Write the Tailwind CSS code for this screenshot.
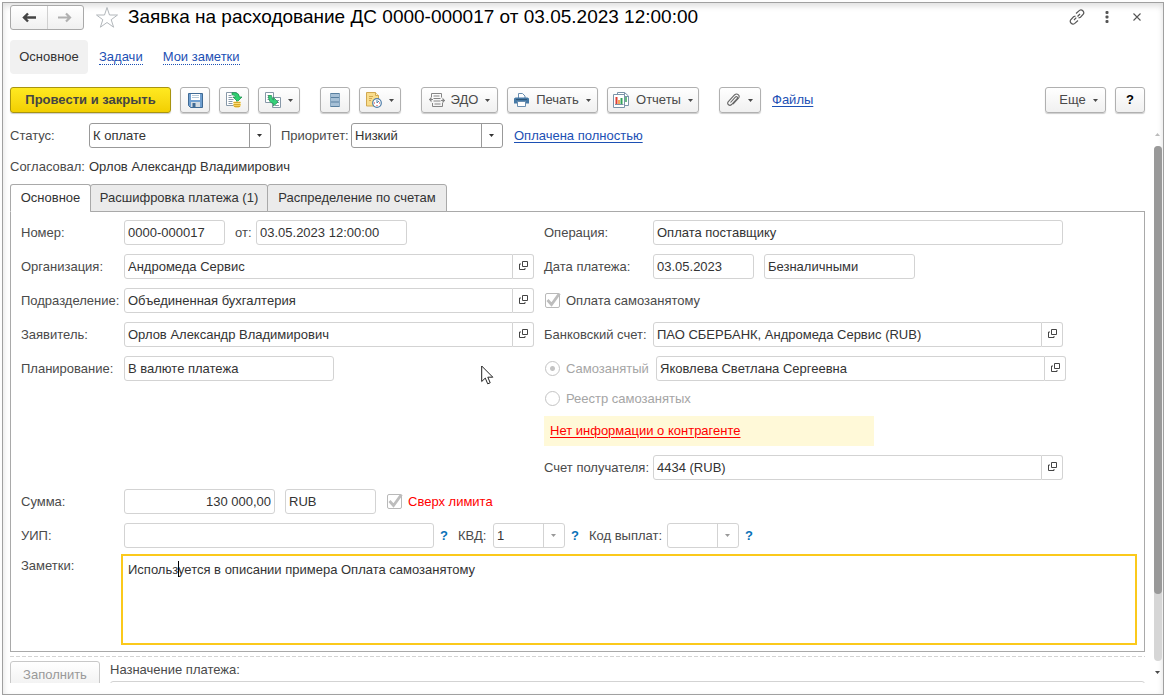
<!DOCTYPE html>
<html lang="ru">
<head>
<meta charset="utf-8">
<title>Заявка на расходование ДС</title>
<script src="https://cdn.jsdelivr.net/npm/@tailwindcss/browser@4"></script>
</head>
<body class="bg-[#fdfdfd] font-['Liberation_Sans',Arial,sans-serif] text-[13px] leading-4 text-[#4a4a4a]">
<svg class="hidden">
  <symbol id="open" viewBox="0 0 9 9"><path d="M3.500.5h5v5h-5zM2 3H.5v5.500H6V7" fill="none" stroke="#444" /></symbol>
  <symbol id="down" viewBox="0 0 5 3"><path d="M0 0h5L2.500 3z" fill="currentColor" /></symbol>
  <symbol id="tick" viewBox="0 0 16 16"><path d="M2.500 7l4 4.500L14.500 .5" fill="none" stroke="#bdbdbd" stroke-width="2.800" /></symbol>
</svg>
<div class="flex h-screen pt-[2px] pl-[2px]">
<main class="relative flex min-w-0 flex-1 flex-col overflow-hidden border border-[#a0a0a0] bg-white pb-[11px] pl-[7px] shadow-[inset_0_3px_6px_#dedede]">

  <header class="flex h-[26px] items-center pt-[2px] pr-[17px]">
    <div class="flex h-[25px] w-[74px] shrink-0 overflow-hidden rounded-[3px] border border-[#a9a9a9] bg-linear-to-b from-white to-[#f0f0f0]">
      <button aria-label="Назад" class="flex flex-1 items-center justify-center border-r border-[#d0d0d0]"><svg class="h-[11px] w-[14px]" viewBox="0 0 14 11"><path d="M14 5.500H2M6 1.500L2 5.500l4 4" fill="none" stroke="#444" stroke-width="2.400"/></svg></button>
      <button aria-label="Вперед" class="flex flex-1 items-center justify-center"><svg class="h-[11px] w-[14px]" viewBox="0 0 14 11"><path d="M0 5.500h12M8 1.500l4 4-4 4" fill="none" stroke="#b0b0b0" stroke-width="2.200"/></svg></button>
    </div>
    <button aria-label="В избранное" class="ml-[11px] shrink-0"><svg class="h-[23px] w-[24px]" viewBox="0 0 24 23"><path d="M12 1.500l2.500 7.500h8l-6.300 4.700 2.400 7.500L12 16.500l-6.600 4.700 2.400-7.500L1.500 9h8z" fill="#fff" stroke="#b2b7bb"/></svg></button>
    <h1 class="ml-[9px] flex-1 truncate text-[19px] leading-6 text-black">Заявка на расходование ДС 0000-000017 от 03.05.2023 12:00:00</h1>
    <button aria-label="Получить ссылку"><svg class="h-4 w-4" viewBox="0 0 16 16" fill="none" stroke="#555" stroke-width="1.200"><path d="M7 4.500L10.500 1.400c2.200-1.700 5.400 1.300 3.800 3.800L11.500 8.200 9.500 9M9 11.500l-3.500 3.100c-2.200 1.700-5.400-1.300-3.800-3.800L4.500 7.800 6.500 7M5 11l2.300-2.300M8.500 7.500L11 5"/></svg></button>
    <button aria-label="Меню" class="ml-[20px]"><svg class="h-[12px] w-[4px]" viewBox="0 0 4 12" fill="#555"><rect x=".5" y="0" width="3" height="3" rx="1"/><rect x=".5" y="4.500" width="3" height="3" rx="1"/><rect x=".5" y="9" width="3" height="3" rx="1"/></svg></button>
    <button aria-label="Закрыть" class="mr-[5px] ml-[24px]"><svg class="h-[8px] w-[8px]" viewBox="0 0 8 8"><path d="M.5.5l7 7M7.500.5l-7 7" stroke="#555" stroke-width="1.100"/></svg></button>
  </header>

  <nav class="mt-[11px] flex h-[34px] shrink-0 items-center text-[#1c50b4]">
    <a href="#" class="flex h-full w-[78px] items-center justify-center rounded-[4px] bg-[#f1f1f1] text-[#333]">Основное</a>
    <a href="#" class="ml-[11px] border-b border-dotted border-[#1c50b4] leading-[14px]">Задачи</a>
    <a href="#" class="ml-[20px] border-b border-dotted border-[#1c50b4] leading-[14px]">Мои заметки</a>
  </nav>

  <div class="mt-[13px] flex h-[26px] shrink-0 items-center gap-[9px] pr-[18px] *:shrink-0 [&>button]:flex [&>button]:h-full [&>button]:items-center [&>button]:justify-center [&>button]:rounded-[3px] [&>button]:border [&>button]:shadow-[0_1px_1px_#ccc]">
    <button class="w-[161px] border-[#a89410] bg-linear-to-b from-[#ffe920] to-[#f2cf00] font-bold text-[#444]">Провести и закрыть</button>
    <button aria-label="Записать" class="w-[30px] border-[#b0b0b0] bg-linear-to-b from-white to-[#f0f0f0]"><svg class="h-[15px] w-[15px]" viewBox="0 0 15 15"><path d="M.5.5h14v14h-12l-2-2z" fill="#6f9fd0" stroke="#3f6a94"/><path d="M3 1h9v6H3z" fill="#fff"/><path d="M4 2.500h7M4 4.500h7" stroke="#b5c8d8"/><path d="M3 9h9v5H3z" fill="#d3dbe2"/><path d="M4.500 10h3v4h-3z" fill="#3f6a94"/></svg></button>
    <button aria-label="Провести" class="w-[30px] border-[#b0b0b0] bg-linear-to-b from-white to-[#f0f0f0]"><svg class="h-4 w-4" viewBox="0 0 16 16"><path d="M.5.5h10v13H.5z" fill="#fff" stroke="#8798a8"/><path d="M2.500 3.500h3M2.500 5.500h4M2.500 7.500h5M2.500 9.500h4M2.500 11.500h4" stroke="#8798a8"/><path d="M6 .7h3.500q3.500.3 4 4.300H16L11.500 9.500 7 5h2.500Q9.500 3 6 2.800z" fill="#2fd070" stroke="#178a48" stroke-width=".7"/><ellipse cx="11" cy="13.500" rx="3.500" ry="2" fill="#f0c43a"/><path d="M7.500 9.500h7v4h-7z" fill="#fbe07a"/><path d="M7.500 10.500h7M7.500 12.500h7M8 14.500h6" stroke="#d8a82a"/></svg></button>
    <button aria-label="Создать на основании" class="w-[42px] gap-[7px] border-[#b0b0b0] bg-linear-to-b from-white to-[#f0f0f0]"><svg class="h-4 w-4" viewBox="0 0 16 16"><path d="M.5.5h8v10h-8z" fill="#fff" stroke="#8798a8"/><path d="M2.500 3.500h2M2.500 5.500h2M2.500 7.500h2" stroke="#8798a8"/><path d="M7.500 5.500h8v10h-8z" fill="#fff" stroke="#8798a8"/><path d="M12 8.500h2M12 10.500h2M10 13.500h4" stroke="#8798a8"/><path d="M3.500 3.500h3q0 4 2 4.500V5.500L13 10l-4.500 4v-2.500Q3.500 11 3.500 3.500z" fill="#35d07a" stroke="#178a48" stroke-width=".7"/></svg><svg class="h-[3px] w-[5px]"><use href="#down"/></svg></button>
    <button aria-label="Список" class="ml-[11px] w-[30px] border-[#b0b0b0] bg-linear-to-b from-white to-[#f0f0f0]"><svg class="h-[14px] w-[10px]" viewBox="0 0 10 14"><path d="M0 0h10v14H0z" fill="#a6c0d6"/><path d="M0 .5h10M0 4.500h10M0 9h10M0 13.500h10" stroke="#587f9f"/><path d="M.5 0v14M9.500 0v14" stroke="#86a6c0"/></svg></button>
    <button aria-label="Отложить" class="w-[42px] gap-[7px] border-[#b0b0b0] bg-linear-to-b from-white to-[#f0f0f0]"><svg class="h-4 w-4" viewBox="0 0 16 16"><path d="M.5.500h9l3 3v10.500H.5z" fill="#f9dd8c" stroke="#d1a851"/><path d="M9.500.5v3h3" fill="#fff2c4" stroke="#d1a851"/><path d="M3 4.500h4M3 6.500h3M3 8.500h2" stroke="#d1a851"/><circle cx="11" cy="11" r="4.300" fill="#fff" stroke="#4f7ea9" stroke-width="1.200"/><path d="M11 11V8M11 11l2-2" stroke="#4f7ea9"/><path d="M8 10.500h1v1H8zM13 10.500h1v1h-1zM10.500 13h1v1h-1z" fill="#d33"/></svg><svg class="h-[3px] w-[5px]"><use href="#down"/></svg></button>
    <button class="ml-[11px] w-[77px] border-[#b0b0b0] bg-linear-to-b from-white to-[#f0f0f0]"><svg class="mr-[6px] h-[15px] w-4" viewBox="0 0 16 15" fill="none" stroke="#858585"><path d="M2.500 4V.5h10v4M3.500 10v3.500h10V10M4.500 3h6M4.500 5.500h7M4.500 8h7M5.500 11h6M0 6.500h4M12 7.500h4"/><path d="M2.500 3.500v6L0 6.500zM13.500 4.500v6L16 7.500z" fill="#858585" stroke="none"/></svg>ЭДО<svg class="ml-[7px] h-[3px] w-[5px]"><use href="#down"/></svg></button>
    <button class="w-[91px] border-[#b0b0b0] bg-linear-to-b from-white to-[#f0f0f0]"><svg class="mr-[7px] h-[14px] w-[15px]" viewBox="0 0 15 14"><path d="M4.500 5V.5h4l2.500 2.500V5" fill="#fff" stroke="#6b8fb0"/><path d="M1.500 4.500h12l1.500 1v5H0v-5z" fill="#4679a5"/><path d="M2 6.500h11" stroke="#2d5578"/><path d="M3.500 8.500h8v5h-8z" fill="#fff" stroke="#6b8fb0"/></svg>Печать<svg class="ml-[7px] h-[3px] w-[5px]"><use href="#down"/></svg></button>
    <button class="w-[92px] border-[#b0b0b0] bg-linear-to-b from-white to-[#f0f0f0]"><svg class="mr-[7px] h-4 w-4" viewBox="0 0 16 16"><path d="M4.500.5h7l4 3.500v9.500h-11z" fill="#fff" stroke="#7b93a8"/><path d="M11.500.5v4h4" fill="none" stroke="#7b93a8"/><path d="M.5 2.500h11v13H.5z" fill="#fff" stroke="#7b93a8"/><path d="M3.500 5v7" stroke="#de3d32" stroke-width="2"/><path d="M6 8v4" stroke="#f08a24" stroke-width="1.500"/><path d="M8.500 6v6" stroke="#35a35b" stroke-width="2"/><path d="M13 5v5" stroke="#35a35b" stroke-width="1.500"/><path d="M2 12.500h8.500" stroke="#7b93a8"/></svg>Отчеты<svg class="ml-[7px] h-[3px] w-[5px]"><use href="#down"/></svg></button>
    <button aria-label="Присоединенные файлы" class="ml-[11px] w-[42px] gap-[8px] border-[#b0b0b0] bg-linear-to-b from-white to-[#f0f0f0]"><svg class="h-[14px] w-[13px]" viewBox="0 0 13 14" fill="none" stroke="#666" stroke-width="1.100"><path d="M3.500 9.500l5-5.500c1.200-1.100 2.600.2 1.600 1.500l-5.500 6C2.500 13.500-.5 11 1.300 8.700L7.500 2c2.500-2.500 6 .5 4 3.200l-5.500 6"/></svg><svg class="h-[3px] w-[5px]"><use href="#down"/></svg></button>
    <a href="#" class="ml-[2px] text-[#1c50b4] underline underline-offset-2">Файлы</a>
    <button class="ml-auto w-[61px] border-[#b0b0b0] bg-linear-to-b from-white to-[#f0f0f0] pl-[6px]">Еще<svg class="ml-[7px] h-[3px] w-[5px]"><use href="#down"/></svg></button>
    <button aria-label="Справка" class="w-[30px] border-[#b0b0b0] bg-linear-to-b from-white to-[#f0f0f0] font-bold text-black">?</button>
  </div>

  <div class="mt-[10px] flex min-h-0 flex-1 pr-[1px]">
    <div class="min-w-0 flex-1 overflow-hidden">
      <div class="flex h-[25px] items-center">
        <label for="status" class="w-[79px]">Статус:</label>
        <div class="relative h-full w-[182px] rounded-[3px] border border-[#999] text-[#333]">
          <select id="status" class="h-full w-full appearance-none pl-[3px]"><option>К оплате</option></select>
          <span class="pointer-events-none absolute inset-y-0 right-0 flex w-[21px] items-center justify-center border-l border-[#999] pr-px"><svg class="h-[3px] w-[5px]"><use href="#down"/></svg></span>
        </div>
        <label for="prio" class="ml-[10px] w-[70px]">Приоритет:</label>
        <div class="relative h-full w-[152px] rounded-[3px] border border-[#999] text-[#333]">
          <select id="prio" class="h-full w-full appearance-none pl-[3px]"><option>Низкий</option></select>
          <span class="pointer-events-none absolute inset-y-0 right-0 flex w-[21px] items-center justify-center border-l border-[#999] pr-px"><svg class="h-[3px] w-[5px]"><use href="#down"/></svg></span>
        </div>
        <a href="#" class="ml-[11px] text-[#1c50b4] underline underline-offset-2">Оплачена полностью</a>
      </div>
      <div class="mt-[11px] flex"><span class="w-[79px]">Согласовал:</span><span class="text-[#333]">Орлов Александр Владимирович</span></div>

      <div role="tablist" class="relative -mb-px mt-[9px] flex h-[28px] text-[#333] *:border *:border-[#a9a9a9]">
        <button role="tab" aria-selected="true" class="w-[81px] rounded-t-[3px] border-b-white! bg-white">Основное</button>
        <button role="tab" class="-ml-px w-[178px] rounded-t-[3px] bg-[#ebebeb]">Расшифровка платежа (1)</button>
        <button role="tab" class="-ml-px w-[180px] rounded-t-[3px] bg-[#ebebeb]">Распределение по счетам</button>
      </div>

      <section class="border border-[#a9a9a9] pt-[8px] pr-[7px] pb-[6px] pl-[10px] [&_input[type=text]]:h-[25px] [&_input[type=text]]:rounded-[3px] [&_input[type=text]]:border [&_input[type=text]]:border-[#d3d3d3] [&_input[type=text]]:px-[3px] [&_input[type=text]]:text-[#333]">
        <div class="flex gap-[10px]">
          <div class="flex w-[513px] shrink-0 flex-col gap-[9px]">
            <div class="flex items-center"><label for="num" class="w-[103px]">Номер:</label><input id="num" type="text" value="0000-000017" class="w-[101px]"><label for="dt" class="ml-[10px] w-[21px]">от:</label><input id="dt" type="text" value="03.05.2023 12:00:00" class="w-[151px]"></div>
            <div class="flex items-center"><label for="org" class="w-[103px]">Организация:</label><input id="org" type="text" value="Андромеда Сервис" class="min-w-0 flex-1 rounded-r-none!"><button aria-label="Открыть организацию" class="flex h-[25px] w-[21px] items-center justify-center rounded-r-[3px] border border-l-0 border-[#d3d3d3] pb-[2px]"><svg class="h-[9px] w-[9px]"><use href="#open"/></svg></button></div>
            <div class="flex items-center"><label for="dep" class="w-[103px]">Подразделение:</label><input id="dep" type="text" value="Объединенная бухгалтерия" class="min-w-0 flex-1 rounded-r-none!"><button aria-label="Открыть подразделение" class="flex h-[25px] w-[21px] items-center justify-center rounded-r-[3px] border border-l-0 border-[#d3d3d3] pb-[2px]"><svg class="h-[9px] w-[9px]"><use href="#open"/></svg></button></div>
            <div class="flex items-center"><label for="who" class="w-[103px]">Заявитель:</label><input id="who" type="text" value="Орлов Александр Владимирович" class="min-w-0 flex-1 rounded-r-none!"><button aria-label="Открыть заявителя" class="flex h-[25px] w-[21px] items-center justify-center rounded-r-[3px] border border-l-0 border-[#d3d3d3] pb-[2px]"><svg class="h-[9px] w-[9px]"><use href="#open"/></svg></button></div>
            <div class="flex items-center"><label for="plan" class="w-[103px]">Планирование:</label><input id="plan" type="text" value="В валюте платежа" class="w-[210px]"></div>
          </div>
          <div class="flex w-[522px] shrink-0 flex-col gap-[9px]">
            <div class="flex items-center"><label for="op" class="w-[109px]">Операция:</label><input id="op" type="text" value="Оплата поставщику" class="w-[410px]"></div>
            <div class="flex items-center"><label for="pd" class="w-[109px]">Дата платежа:</label><input id="pd" type="text" value="03.05.2023" class="w-[101px]"><input aria-label="Форма оплаты" type="text" value="Безналичными" class="ml-[10px] w-[151px]"></div>
            <label class="flex h-[25px] items-center"><span class="relative mr-[6px] ml-px h-[15px] w-[15px]"><input type="checkbox" checked disabled class="block h-[15px] w-[15px] appearance-none rounded-[2px] border border-[#b9b9b9]"><svg class="absolute top-0 left-0 h-4 w-4"><use href="#tick"/></svg></span>Оплата самозанятому</label>
            <div class="flex items-center"><label for="bank" class="w-[109px]">Банковский счет:</label><input id="bank" type="text" value="ПАО СБЕРБАНК, Андромеда Сервис (RUB)" class="w-[389px] rounded-r-none!"><button aria-label="Открыть счет" class="flex h-[25px] w-[21px] items-center justify-center rounded-r-[3px] border border-l-0 border-[#d3d3d3] pb-[2px]"><svg class="h-[9px] w-[9px]"><use href="#open"/></svg></button></div>
            <div class="flex items-center"><label class="flex w-[112px] items-center text-[#a5a5a5]"><input type="radio" name="payee" checked disabled class="mr-[6px] ml-px h-[15px] w-[15px] appearance-none rounded-full border border-[#c4c4c4] bg-[radial-gradient(circle,#c4c4c4_2px,transparent_3px)]">Самозанятый</label><input aria-label="Самозанятый, имя" type="text" value="Яковлева Светлана Сергеевна" class="w-[389px] rounded-r-none!"><button aria-label="Открыть самозанятого" class="flex h-[25px] w-[21px] items-center justify-center rounded-r-[3px] border border-l-0 border-[#d3d3d3] pb-[2px]"><svg class="h-[9px] w-[9px]"><use href="#open"/></svg></button></div>
            <label class="flex h-[17px] items-center text-[#a5a5a5]"><input type="radio" name="payee" disabled class="mr-[6px] ml-px h-[15px] w-[15px] appearance-none rounded-full border border-[#c4c4c4]">Реестр самозанятых</label>
            <div class="flex h-[30px] w-[330px] items-center bg-[#fff9d8] pl-[6px]"><a href="#" class="text-[#ff0000] underline underline-offset-2">Нет информации о контрагенте</a></div>
            <div class="flex items-center"><label for="acc" class="w-[109px]">Счет получателя:</label><input id="acc" type="text" value="4434 (RUB)" class="w-[389px] rounded-r-none!"><button aria-label="Открыть счет получателя" class="flex h-[25px] w-[21px] items-center justify-center rounded-r-[3px] border border-l-0 border-[#d3d3d3] pb-[2px]"><svg class="h-[9px] w-[9px]"><use href="#open"/></svg></button></div>
          </div>
        </div>
        <div class="mt-[9px] flex items-center"><label for="sum" class="w-[103px]">Сумма:</label><input id="sum" type="text" value="130 000,00" class="w-[151px] text-right"><input aria-label="Валюта" type="text" value="RUB" class="ml-[10px] w-[91px]">
          <label class="ml-[10px] flex items-center text-[#ff0000]"><span class="relative mr-[6px] ml-px h-[15px] w-[15px]"><input type="checkbox" checked disabled class="block h-[15px] w-[15px] appearance-none rounded-[2px] border border-[#b9b9b9]"><svg class="absolute top-0 left-0 h-4 w-4"><use href="#tick"/></svg></span>Сверх лимита</label></div>
        <div class="mt-[9px] flex items-center">
          <label for="uip" class="w-[103px]">УИП:</label><input id="uip" type="text" class="w-[310px]">
          <button aria-label="Справка: УИП" class="w-[20px] font-bold text-[#0a72b8]">?</button>
          <label for="kvd" class="ml-[4px] w-[35px]">КВД:</label>
          <div class="relative h-[25px] w-[72px] rounded-[3px] border border-[#d3d3d3] text-[#333]"><select id="kvd" class="h-full w-full appearance-none pl-[3px]"><option>1</option></select><span class="pointer-events-none absolute inset-y-0 right-0 flex w-[21px] items-center justify-center border-l border-[#d3d3d3] pr-px text-[#999]"><svg class="h-[3px] w-[5px]"><use href="#down"/></svg></span></div>
          <button aria-label="Справка: КВД" class="w-[20px] font-bold text-[#0a72b8]">?</button>
          <label for="code" class="ml-[4px] w-[78px]">Код выплат:</label>
          <div class="relative h-[25px] w-[72px] rounded-[3px] border border-[#d3d3d3] text-[#333]"><select id="code" class="h-full w-full appearance-none pl-[3px]"><option></option></select><span class="pointer-events-none absolute inset-y-0 right-0 flex w-[21px] items-center justify-center border-l border-[#d3d3d3] pr-px text-[#999]"><svg class="h-[3px] w-[5px]"><use href="#down"/></svg></span></div>
          <button aria-label="Справка: код выплат" class="w-[20px] font-bold text-[#0a72b8]">?</button>
        </div>
        <div class="mt-[6px] flex"><label for="notes" class="w-[100px] pt-[4px]">Заметки:</label>
          <div class="relative flex-1"><textarea id="notes" class="block h-[91px] w-full resize-none border-2 border-[#fbc91b] px-[5px] py-[6px] text-[#333] outline-none">Используется в описании примера Оплата самозанятому</textarea><span class="absolute top-[7px] left-[57px] h-4 w-px bg-black"></span></div>
        </div>
      </section>

      <div class="mt-[4px] h-px bg-[repeating-linear-gradient(90deg,#d3d3d3_0_4px,transparent_4px_6px)]"></div>
      <div class="mt-[4px] flex">
        <button disabled class="h-[28px] w-[90px] rounded-[3px] border border-[#c8c8c8] bg-linear-to-b from-white to-[#f0f0f0] text-[#999]">Заполнить</button>
        <div class="ml-[10px] flex-1 pt-px"><label for="purpose">Назначение платежа:</label><input id="purpose" class="mt-[3px] block h-[25px] w-full rounded-[3px] border border-[#d3d3d3]"></div>
      </div>
    </div>
    <div class="ml-[8px] flex w-[9px] flex-col items-center pt-[10px] pb-[9px]">
      <svg class="h-[3px] w-[5px] rotate-180 text-[#bbb]"><use href="#down"/></svg>
      <div class="mt-[10px] mb-[10px] w-[8px] flex-1 rounded-full bg-[#d6d6d6]"><div class="h-[87%] rounded-full bg-[#999]"></div></div>
      <svg class="h-[3px] w-[5px]"><use href="#down"/></svg>
    </div>
  </div>

  <!-- Mouse pointer -->
  <svg class="pointer-events-none absolute top-[362px] left-[478px] h-[20px] w-[13px]" viewBox="0 0 13 20"><path d="M.7 1v15.500l3.600-3.400 2.400 5.700 2.500-1-2.400-5.600h5z" fill="#fff" stroke="#222"/></svg>
</main>
</div>
</body>
</html>
